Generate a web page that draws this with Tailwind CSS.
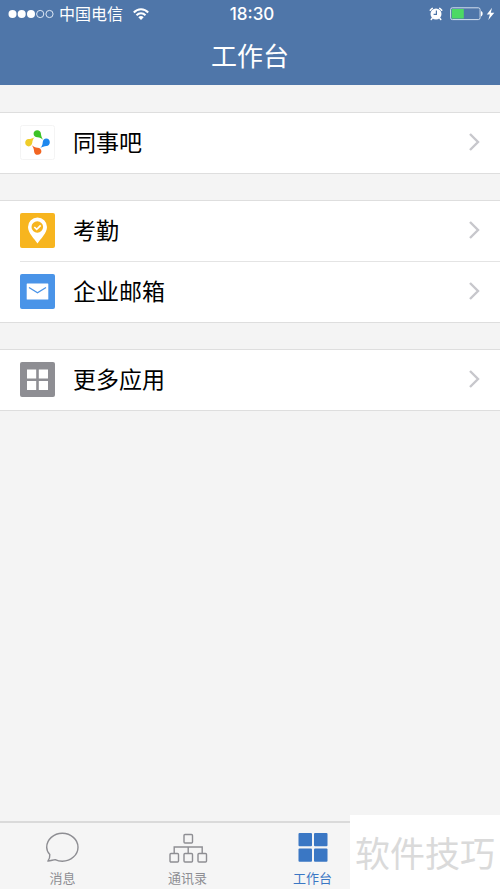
<!DOCTYPE html>
<html lang="zh-CN">
<head>
<meta charset="utf-8">
<meta name="viewport" content="width=device-width, initial-scale=1">
<title>工作台</title>
<script src="https://cdn.jsdelivr.net/npm/@tailwindcss/browser@4"></script>
</head>
<body class="flex min-h-screen flex-col bg-[#f4f4f4] font-['Inter','Noto_Sans_CJK_SC',sans-serif] text-black">

<header class="bg-[#4f76a9] text-white">
  <div class="grid h-7 grid-cols-3 items-center pr-1 pl-2">
    <div class="flex items-center">
      <svg class="h-3 w-12" viewBox="0 0 48 12" aria-hidden="true">
        <g fill="#fff"><circle cx="4.5" cy="6" r="4"/><circle cx="13.7" cy="6" r="4"/><circle cx="23" cy="6" r="4"/></g>
        <g fill="none" stroke="#dfe9f6" stroke-width="1"><circle cx="32.2" cy="6" r="3.6"/><circle cx="41.5" cy="6" r="3.6"/></g>
      </svg>
      <span class="ml-[3px] pb-0.5 font-['Noto_Sans_CJK_SC',sans-serif] text-[16px] leading-6 whitespace-nowrap">中国电信</span>
      <svg class="ml-2.5 h-3 w-4 shrink-0" viewBox="0 0 16 12" aria-hidden="true">
        <g fill="none" stroke="#fff" stroke-width="2"><path d="M0.8 4.5C4.8 0.2 11.2 0.2 15.2 4.5"/><path d="M3.5 7.3c2.6-2.7 6.4-2.7 9 0"/></g>
        <path fill="#fff" d="M8 12 5.3 9.2c1.6-1.5 3.8-1.5 5.4 0z"/>
      </svg>
    </div>
    <time class="text-center text-[17px] leading-7 font-medium">18:30</time>
    <div class="flex items-center justify-end">
      <svg class="h-4 w-4" viewBox="0 0 16 16" aria-hidden="true">
        <circle cx="8" cy="8" r="5.5" fill="#fff"/>
        <path d="M2.300 4.300A7.500 7.500 0 0 1 4.300 2.400M13.700 4.300a7.500 7.500 0 0 0-2-1.900M4.200 12.300l-1 1.200M11.800 12.300l1 1.200" stroke="#fff" stroke-width="1.500" stroke-linecap="round"/>
        <path d="M8.400 4.600v3.700H5.600" fill="none" stroke="#4f76a9" stroke-width="1.200"/>
      </svg>
      <svg class="ml-1.5 h-4 w-[46px]" viewBox="0 0 46 16" aria-hidden="true">
        <rect x="0.6" y="1.800" width="29.500" height="11.800" rx="1.800" fill="none" stroke="#d3dfee"/>
        <rect x="1.800" y="3" width="12" height="9.500" fill="#4cd964"/>
        <path d="M31 5c2.200.8 2.200 4.600 0 5.400z" fill="#fff"/>
        <path d="M42 1.800 36.800 8.500h3.100l-1.600 5.500L44.300 6.800h-3.500z" fill="#fff"/>
      </svg>
    </div>
  </div>
  <h1 class="h-[57px] text-center font-['Noto_Sans_CJK_SC',sans-serif] text-[26px] leading-[53px] font-normal">工作台</h1>
</header>

<main class="flex grow flex-col gap-[26px] pt-[27px] font-['Noto_Sans_CJK_SC',sans-serif] text-[23px]">
  <section class="border-y border-[#dedede] bg-white">
    <a href="#colleagues" class="flex h-[60px] items-center px-5 pb-0.5">
      <svg class="size-[35px]" viewBox="0 0 35 35" aria-hidden="true">
        <rect x="0.5" y="0.5" width="34" height="34" rx="2" fill="#fff" stroke="#f4f4f4"/>
        <path fill="#3dc326" d="M13.600 8.700C13.600 6.700 15.200 5.200 17.200 5.200c2.200 0 3.600 1.500 3.700 3.400.1 2.200.9 4.100 2.200 6.200-1.800-1.700-3.300-2.300-5.700-2.500-2.200-.2-3.800-1.600-3.800-3.600z"/>
        <path fill="#1e88ee" d="M26.300 13.600c2 0 3.500 1.600 3.500 3.600 0 2.200-1.500 3.600-3.400 3.700-2.200.1-4.100.9-6.200 2.200 1.700-1.800 2.300-3.300 2.500-5.700.2-2.200 1.600-3.800 3.600-3.800z"/>
        <path fill="#f26522" d="M21.400 26.300c0 2-1.600 3.500-3.600 3.500-2.200 0-3.600-1.500-3.700-3.400-.1-2.200-.9-4.100-2.200-6.200 1.800 1.700 3.300 2.300 5.700 2.500 2.200.2 3.800 1.600 3.800 3.600z"/>
        <path fill="#f0cd2a" d="M8.700 21.400c-2 0-3.500-1.600-3.500-3.600 0-2.200 1.500-3.600 3.400-3.700 2.200-.1 4.100-.9 6.200-2.200-1.700 1.800-2.300 3.300-2.500 5.700-.2 2.200-1.600 3.800-3.600 3.800z"/>
      </svg>
      <span class="ml-[18px] grow pb-0.5">同事吧</span>
      <svg class="h-5 w-3" viewBox="0 0 12 20" fill="none" stroke="#c7c7cc" stroke-width="2.4" aria-hidden="true"><path d="m2 2 8 8-8 8"/></svg>
    </a>
  </section>

  <section class="border-y border-[#dedede] bg-white">
    <a href="#attendance" class="flex h-[60px] items-center px-5 pb-0.5">
      <svg class="size-[35px]" viewBox="0 0 35 35" aria-hidden="true">
        <rect width="35" height="35" rx="2" fill="#f7b51f"/>
        <path fill="#fff" d="M17.500 30.500C14.500 26 8 20 8 14a9.500 9.500 0 0 1 19 0c0 6-6.500 12-9.500 16.500z"/>
        <circle cx="17.300" cy="14" r="5.800" fill="#f7b51f"/>
        <path d="m14.300 14 2.400 2.400 4-4.100" fill="none" stroke="#fff" stroke-width="1.700"/>
      </svg>
      <span class="ml-[18px] grow pb-0.5">考勤</span>
      <svg class="h-5 w-3" viewBox="0 0 12 20" fill="none" stroke="#c7c7cc" stroke-width="2.4" aria-hidden="true"><path d="m2 2 8 8-8 8"/></svg>
    </a>
    <div class="ml-5 border-t border-[#e4e4e4]"></div>
    <a href="#mail" class="flex h-[60px] items-center px-5 pb-0.5">
      <svg class="size-[35px]" viewBox="0 0 35 35" aria-hidden="true">
        <rect width="35" height="35" rx="2" fill="#4a94e8"/>
        <rect x="6.700" y="9.600" width="21.600" height="16" rx="0.500" fill="#fff"/>
        <path d="m9 13.500 8.500 5.300 8.500-5.300" fill="none" stroke="#4a94e8" stroke-width="1.400"/>
      </svg>
      <span class="ml-[18px] grow pb-0.5">企业邮箱</span>
      <svg class="h-5 w-3" viewBox="0 0 12 20" fill="none" stroke="#c7c7cc" stroke-width="2.4" aria-hidden="true"><path d="m2 2 8 8-8 8"/></svg>
    </a>
  </section>

  <section class="border-y border-[#dedede] bg-white">
    <a href="#more" class="flex h-[60px] items-center px-5 pb-0.5">
      <svg class="size-[35px]" viewBox="0 0 35 35" aria-hidden="true">
        <rect width="35" height="35" rx="2" fill="#8e8e93"/>
        <path fill="#fff" d="M7 7.500h9.200v9H7zM18.800 7.500H28v9h-9.200zM7 19h9.200v9H7zM18.800 19H28v9h-9.200z"/>
      </svg>
      <span class="ml-[18px] grow pb-0.5">更多应用</span>
      <svg class="h-5 w-3" viewBox="0 0 12 20" fill="none" stroke="#c7c7cc" stroke-width="2.4" aria-hidden="true"><path d="m2 2 8 8-8 8"/></svg>
    </a>
  </section>
</main>

<footer class="relative">
  <nav class="grid h-[68px] grid-cols-4 border-t-2 border-[#dadada] bg-[#f5f5f5] font-['Noto_Sans_CJK_SC',sans-serif] text-[13px] leading-[22px] text-[#8e8e93]">
    <a href="#messages" class="flex flex-col items-center pt-2">
      <svg class="h-9 w-10" viewBox="0 0 40 36" fill="none" stroke="#8e8e93" stroke-width="1.400" aria-hidden="true">
        <path d="M6.800 23.600C4.800 21.500 3.700 19 3.700 16.200 3.700 8.500 10.700 2.300 19.300 2.300S35 8.500 35 16.200 28 30.200 19.300 30.200c-2.600 0-5-.6-7.100-1.600-2 .2-4 1-7.300 1.500 1.400-1.900 2.100-4 1.900-6.500z" stroke-linejoin="round"/>
      </svg>
      <span>消息</span>
    </a>
    <a href="#contacts" class="flex flex-col items-center pt-2">
      <svg class="h-9 w-10" viewBox="0 0 40 36" fill="none" stroke="#8e8e93" stroke-width="1.400" aria-hidden="true">
        <rect x="16" y="3.500" width="8.500" height="8.500" rx="1"/>
        <rect x="2" y="22.500" width="8.500" height="8.500" rx="1"/>
        <rect x="16" y="22.500" width="8.500" height="8.500" rx="1"/>
        <rect x="30" y="22.500" width="8.500" height="8.500" rx="1"/>
        <path d="M6.200 22.500v-6.500h28v6.500M20.200 16v6.500"/>
      </svg>
      <span>通讯录</span>
    </a>
    <a href="#workbench" aria-current="page" class="flex flex-col items-center pt-2 text-[#3a77c4]">
      <svg class="h-9 w-10" viewBox="0 0 40 36" fill="#3a77c4" aria-hidden="true">
        <rect x="5.500" y="2" width="13.500" height="13.300" rx="1"/><rect x="21" y="2" width="13.500" height="13.300" rx="1"/>
        <rect x="5.500" y="17.500" width="13.500" height="13.300" rx="1"/><rect x="21" y="17.500" width="13.500" height="13.300" rx="1"/>
      </svg>
      <span>工作台</span>
    </a>
  </nav>
  <div class="absolute right-0 bottom-0 flex h-[74px] w-[150px] items-center justify-center bg-white font-['Noto_Sans_CJK_SC',sans-serif] text-[35px] whitespace-nowrap text-[#dadada]">软件技巧</div>
</footer>
</body>
</html>
